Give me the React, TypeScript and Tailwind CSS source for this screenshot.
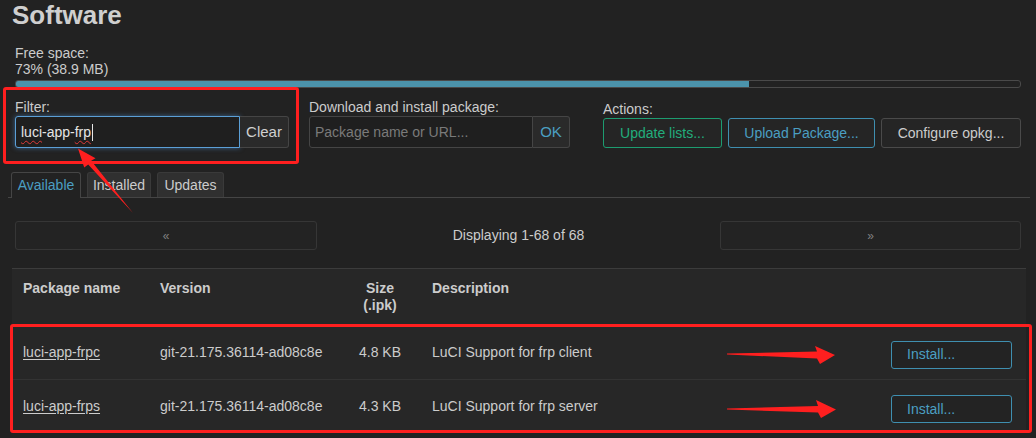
import type { ReactNode } from "react";

type PackageRow = {
  name: string;
  version: string;
  size: string;
  description: string;
};

const packages: PackageRow[] = [
  {
    name: "luci-app-frpc",
    version: "git-21.175.36114-ad08c8e",
    size: "4.8 KB",
    description: "LuCI Support for frp client",
  },
  {
    name: "luci-app-frps",
    version: "git-21.175.36114-ad08c8e",
    size: "4.3 KB",
    description: "LuCI Support for frp server",
  },
];

const cols = "grid grid-cols-[137px_190px_82px_1fr_149px]";

function Label({ children }: { children: ReactNode }) {
  return <div className="h-[16px] text-[14px] leading-[16px]">{children}</div>;
}

function ActionButton({
  children,
  className,
}: {
  children: ReactNode;
  className: string;
}) {
  return (
    <button
      type="button"
      className={`h-[30px] rounded-[3px] border bg-[#252525] text-[14px] ${className}`}
    >
      {children}
    </button>
  );
}

// red annotation arrows drawn over the page
function Annotations() {
  return (
    <svg
      className="pointer-events-none absolute inset-0"
      width={1036}
      height={438}
      viewBox="0 0 1036 438"
    >
      <polygon
        points="133,213 91.2,160.8 95.5,158.2 78,148.5 84.2,167.5 88.2,164.6"
        fill="#ff1f1f"
      />
      <polygon points="727,353.6 817,351.5 815,346 835,355 820,364 817,358.5 727,354.6" fill="#ff1f1f" />
      <polygon points="727,408.6 818,406 816,400 836,409.5 821,418 818,412.5 727,409.6" fill="#ff1f1f" />
    </svg>
  );
}

export default function App() {
  return (
    <div className="relative h-[438px] w-[1036px] overflow-hidden bg-[#222222] font-['Liberation_Sans',Arial,sans-serif] text-[#cccccc]">
      <div className="px-[15px]">
        <h2 className="-ml-[3px] text-[26px] font-bold leading-[30px] text-[#cfcfcf]">
          Software
        </h2>

        <div className="mt-[15px] text-[14px] leading-[16px]">
          <div>Free space:</div>
          <div>73% (38.9 MB)</div>
        </div>
        <div className="mt-[3px] h-[8px] w-full overflow-hidden rounded-[3px] border border-[#4a4a4a] bg-[#222]">
          <div className="h-full bg-[#4b93ab]" style={{ width: "73%" }} />
        </div>

        <div className="mt-[11px] flex">
          <div className="w-[274px]">
            <Label>Filter:</Label>
            <div className="mt-[1px] flex h-[32px]">
              <div className="flex flex-1 items-center rounded-l-[3px] border border-[#5b9fd6] bg-[#1f1f1f] pl-[5px] text-[14px] text-[#e6e6e6] shadow-[0_0_5px_rgba(80,150,220,0.55)]">
                <span className="underline decoration-[#e03a3a] decoration-wavy decoration-1 underline-offset-[3px]">
                  luci
                </span>
                <span>-app-</span>
                <span className="underline decoration-[#e03a3a] decoration-wavy decoration-1 underline-offset-[3px]">
                  frp
                </span>
                <span className="ml-px inline-block h-[17px] w-px bg-[#e6e6e6]" />
              </div>
              <button
                type="button"
                className="w-[49px] rounded-r-[3px] border border-l-0 border-[#454545] bg-[#2a2a2a] text-[15px] text-[#d0d0d0]"
              >
                Clear
              </button>
            </div>
          </div>

          <div className="ml-[20px] w-[261px]">
            <Label>Download and install package:</Label>
            <div className="mt-[1px] flex h-[32px]">
              <div className="flex flex-1 items-center rounded-l-[3px] border border-[#454545] bg-[#1f1f1f] pl-[5px] text-[14px] text-[#7a7a7a]">
                Package name or URL...
              </div>
              <button
                type="button"
                className="w-[37px] rounded-r-[3px] border border-l-0 border-[#454545] bg-[#2a2a2a] text-[15px] text-[#4b9fc2]"
              >
                OK
              </button>
            </div>
          </div>

          <div className="ml-[33px] flex-1">
            <div className="mt-[2px]">
              <Label>Actions:</Label>
            </div>
            <div className="mt-[1px] flex gap-[6px]">
              <ActionButton className="w-[119px] border-[#1d9c70] text-[#22ad7c]">
                Update lists...
              </ActionButton>
              <ActionButton className="w-[147px] border-[#3f8fb0] text-[#4b9fc2]">
                Upload Package...
              </ActionButton>
              <ActionButton className="w-[140px] border-[#4a4a4a] text-[#cccccc]">
                Configure opkg...
              </ActionButton>
            </div>
          </div>
        </div>

        <div className="mt-[24px] -ml-[7px] -mr-[9px] flex gap-[6px] border-b border-[#454545] pl-[3px]">
          <div className="-mb-px flex h-[26px] w-[70px] items-center justify-center rounded-t-[3px] border border-b-0 border-[#454545] bg-[#222222] text-[14px] text-[#4b9fc2]">
            Available
          </div>
          <div className="flex h-[25px] w-[64px] items-center justify-center rounded-t-[3px] border border-b-0 border-[#3a3a3a] bg-[#303030] text-[14px]">
            Installed
          </div>
          <div className="flex h-[25px] w-[67px] items-center justify-center rounded-t-[3px] border border-b-0 border-[#3a3a3a] bg-[#303030] text-[14px]">
            Updates
          </div>
        </div>

        <div className="mt-[23px] flex h-[29px] items-center">
          <button
            type="button"
            className="h-full w-[302px] rounded-[3px] border border-[#363636] bg-[#232323] text-[12px] text-[#808080]"
          >
            «
          </button>
          <div className="flex-1 text-center text-[14px]">Displaying 1-68 of 68</div>
          <button
            type="button"
            className="h-full w-[301px] rounded-[3px] border border-[#363636] bg-[#232323] text-[12px] text-[#808080]"
          >
            »
          </button>
        </div>

        <div className="mt-[18px] -ml-[3px] -mr-[5px] border-t border-[#3c3c3c] bg-[#272727] text-[14px]">
          <div className={`${cols} h-[56px] pt-[11px] font-bold leading-[17px]`}>
            <div className="pl-[11px]">Package name</div>
            <div className="pl-[11px]">Version</div>
            <div className="text-center">
              Size
              <br />
              (.ipk)
            </div>
            <div className="pl-[11px]">Description</div>
            <div />
          </div>
          {packages.map((pkg, i) => (
            <div
              key={pkg.name}
              className={`${cols} h-[54px] items-center ${i > 0 ? "border-t border-[#333333]" : ""}`}
            >
              <div className="pl-[11px]">
                <span className="underline underline-offset-2">{pkg.name}</span>
              </div>
              <div className="pl-[11px]">{pkg.version}</div>
              <div className="text-center">{pkg.size}</div>
              <div className="pl-[11px]">{pkg.description}</div>
              <div className="flex justify-end pr-[14px] pt-[5px]">
                <button
                  type="button"
                  className="h-[28px] w-[121px] rounded-[3px] border border-[#3f8fb0] bg-[#232323] pl-[15px] text-left text-[14px] text-[#4b9fc2]"
                >
                  Install...
                </button>
              </div>
            </div>
          ))}
        </div>
      </div>

      <div className="pointer-events-none absolute left-[3px] top-[87px] h-[77px] w-[296px] rounded-[3px] border-[3px] border-[#ff1f1f]" />
      <div className="pointer-events-none absolute left-[10px] top-[324px] h-[109px] w-[1022px] rounded-[3px] border-[3px] border-[#ff1f1f]" />
      <Annotations />
    </div>
  );
}
